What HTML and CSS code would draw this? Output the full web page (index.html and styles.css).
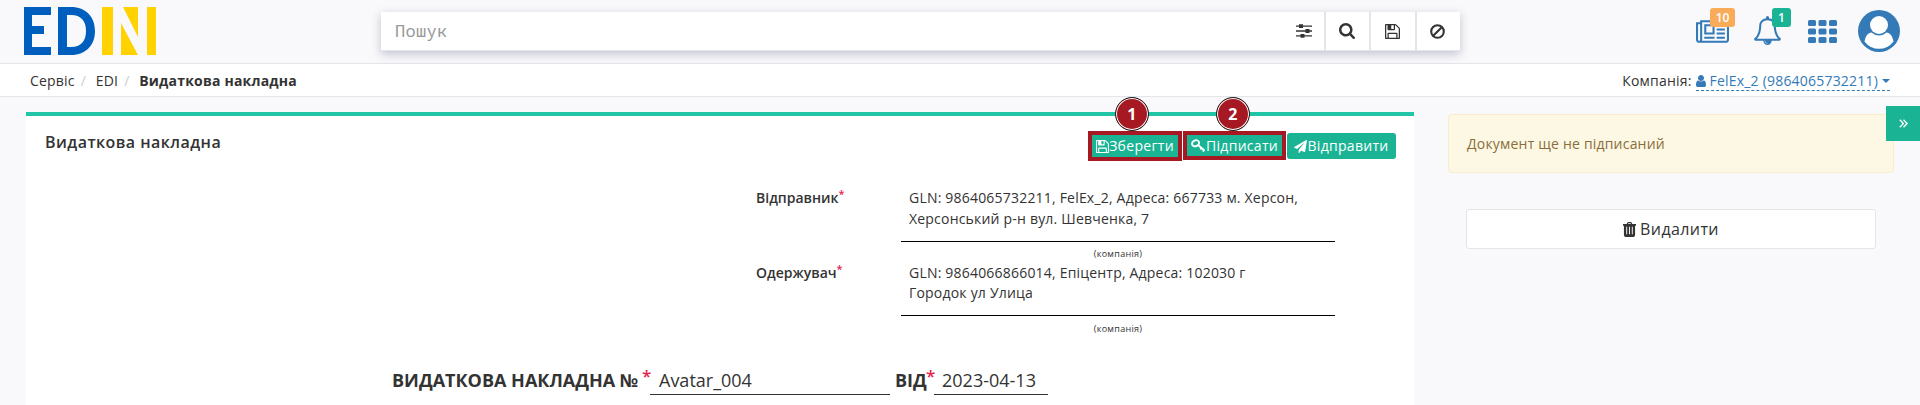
FILE: index.html
```html
<!DOCTYPE html>
<html lang="uk">
<head>
<meta charset="utf-8">
<title>Видаткова накладна</title>
<link rel="stylesheet" href="styles.css">
</head>
<body>
<svg class="sprite" aria-hidden="true">
  <symbol id="floppy" viewBox="128 128 1536 1536"><path d="M512 1536h768v-384h-768v384zm896 0h128v-896q0-14-10-38.5t-20-34.5l-281-281q-10-10-34-20t-39-10v416q0 40-28 68t-68 28h-576q-40 0-68-28t-28-68v-416h-128v1280h128v-416q0-40 28-68t68-28h832q40 0 68 28t28 68v416zm-384-928v-320q0-13-9.5-22.5t-22.5-9.5h-192q-13 0-22.5 9.5t-9.5 22.5v320q0 13 9.5 22.5t22.5 9.5h192q13 0 22.5-9.5t9.5-22.5zm640 32v928q0 40-28 68t-68 28h-1344q-40 0-68-28t-28-68v-1344q0-40 28-68t68-28h928q40 0 88 20t76 48l280 280q28 28 48 76t20 88z"/></symbol>
</svg>

<header class="topbar">
  <svg class="logo" viewBox="0 0 132 48">
    <path fill="#005fbe" d="M0 0H27V8H8V19H20V27H8V40H27V48H0ZM34 0H47C62 0 71 10 71 24S62 48 47 48H34ZM43 8V40H47C57 40 62 34 62 24S57 8 47 8Z"/>
    <path fill="#ffd200" d="M78 0H89V48H78ZM97 16L114 48H97ZM108 0H114V30L99 0ZM123 0H132V48H123Z"/>
  </svg>
  <div class="search">
    <div class="search-field"><span>Пошук</span>
      <svg class="i-sliders" viewBox="0 0 16 14"><path d="M0 2.2H16M0 7H16M0 11.8H16" stroke="#333" stroke-width="1.3"/><path fill="#333" d="M3 .3h4v3.8H3zM9.500 5.100h4v3.800h-4zM4.500 9.900h4v3.800h-4z"/></svg>
    </div>
    <div class="search-btn"><svg class="i16" viewBox="0 128 1664 1664"><path d="M1152 832q0-185-131.500-316.500t-316.500-131.500-316.500 131.500-131.500 316.500 131.500 316.500 316.500 131.500 316.500-131.500 131.500-316.500zm512 832q0 52-38 90t-90 38q-54 0-90-38l-343-342q-179 124-399 124-143 0-273.500-55.500t-225-150-150-225-55.500-273.500 55.500-273.500 150-225 225-150 273.500-55.500 273.500 55.500 225 150 150 225 55.500 273.500q0 220-124 399l343 343q37 37 37 90z"/></svg></div>
    <div class="search-btn"><svg class="i15"><use href="#floppy"/></svg></div>
    <div class="search-btn"><svg class="i15" viewBox="0 0 15 15"><g fill="none" stroke="#333" stroke-width="2.100"><circle cx="7.500" cy="7.500" r="6.300"/><path d="M3.200 11.800L11.800 3.200"/></g></svg></div>
  </div>
  <nav class="tools">
    <div class="tool tool-news"><svg viewBox="0 128 2048 1408"><path d="M1024 512h-384v384h384v-384zm128 640v128h-640v-128h640zm0-768v640h-640v-640h640zm640 768v128h-512v-128h512zm0-256v128h-512v-128h512zm0-256v128h-512v-128h512zm0-256v128h-512v-128h512zm-1536 960v-960h-128v960q0 26 19 45t45 19 45-19 19-45zm1664 0v-1088h-1536v1088q0 33-11 64h1483q26 0 45-19t19-45zm128-1216v1216q0 80-56 136t-136 56h-1664q-80 0-136-56t-56-136v-1088h256v-128h1792z"/></svg><span class="badge badge-orange">10</span></div>
    <div class="tool tool-bell"><svg viewBox="64 0 1664 1792"><path d="M912 1696q0-16-16-16-59 0-101.500-42.500t-42.500-101.500q0-16-16-16t-16 16q0 73 51.500 124.500t124.500 51.500q16 0 16-16zm-666-288h1300q-266-300-266-832 0-51-24-105t-69-103-121.500-80.500-169.500-31.500-169.500 31.500-121.500 80.500-69 103-24 105q0 532-266 832zm1482 0q0 52-38 90t-90 38h-448q0 106-75 181t-181 75-181-75-75-181h-448q-52 0-90-38t-38-90q50-42 91-88t85-119.500 74.500-158.500 50-206 19.500-260q0-152 117-282.500t307-158.500q-8-19-8-39 0-40 28-68t68-28 68 28 28 68q0 20-8 39 190 28 307 158.500t117 282.500q0 139 19.500 260t50 206 74.500 158.500 85 119.500 91 88z"/></svg><span class="badge badge-green">1</span></div>
    <svg class="tool-grid" viewBox="0 0 29 23"><g><rect width="8" height="6" rx="1.500"/><rect x="10.500" width="8" height="6" rx="1.500"/><rect x="21" width="8" height="6" rx="1.500"/><rect y="8.500" width="8" height="6" rx="1.500"/><rect x="10.500" y="8.500" width="8" height="6" rx="1.500"/><rect x="21" y="8.500" width="8" height="6" rx="1.500"/><rect y="17" width="8" height="6" rx="1.500"/><rect x="10.500" y="17" width="8" height="6" rx="1.500"/><rect x="21" y="17" width="8" height="6" rx="1.500"/></g></svg>
    <svg class="tool-user" viewBox="0 0 42 42"><circle cx="21" cy="21" r="21"/><path fill="#fff" d="M6.500 31.500C7.500 26 10 22.500 13.500 22.500A11 11 0 0 0 28.500 22.500C32 22.500 34.500 26 35.500 31.500A18 18 0 0 1 6.500 31.500Z"/><circle cx="21" cy="15" r="9" fill="#fff"/></svg>
  </nav>
</header>

<div class="crumbs">
  <div class="crumb-list"><span>Сервіс</span><i>/</i><span>EDI</span><i>/</i><b>Видаткова накладна</b></div>
  <div class="company">Компанія: <a class="company-link"><svg class="i-user" viewBox="256 128 1280 1536"><path d="M1536 1399q0 109-62.500 187t-150.500 78h-854q-88 0-150.500-78t-62.500-187q0-85 8.500-160.500t31.500-152 58.500-131 94-89 134.500-34.500q131 128 313 128t313-128q76 0 134.500 34.500t94 89 58.500 131 31.500 152 8.500 160.500zm-256-887q0 159-112.500 271.500t-271.500 112.500-271.500-112.500-112.500-271.500 112.500-271.500 271.500-112.500 271.500 112.500 112.500 271.500z"/></svg><span>FelEx_2 (9864065732211)</span><span class="caret"></span></a></div>
</div>

<main class="page">
  <section class="card">
    <div class="card-head">
      <h1>Видаткова накладна</h1>
      <div class="actions">
        <div class="mark mark-save"><button><svg class="i-btn"><use href="#floppy"/></svg>Зберегти</button><span class="step">1</span></div>
        <div class="mark mark-sign"><button><svg class="i-key" viewBox="0 0 15 13"><g fill="none" stroke="#fff"><ellipse cx="4.600" cy="4.300" rx="3.600" ry="2.900" transform="rotate(-25 4.600 4.300)" stroke-width="1.900"/><path d="M7 6L13.200 11.200M9.300 10.300L10.800 8.800M11.800 12.500L13.500 10.500" stroke-width="1.900"/></g></svg>Підписати</button><span class="step">2</span></div>
        <button class="send"><svg class="i-btn" viewBox="0 0 1792 1792"><path d="M1764 11q33 24 27 64l-256 1536q-5 29-32 45-14 8-31 8-11 0-24-5l-453-185-242 295q-18 23-49 23-13 0-22-4-19-7-30.500-23.500t-11.500-36.500v-349l864-1059-1069 925-395-162q-37-14-40-55-2-40 32-59l1664-960q15-9 32-9 20 0 36 11z"/></svg>Відправити</button>
      </div>
    </div>
    <div class="party">
      <div class="label">Відправник<sup>*</sup></div>
      <div class="value"><p>GLN: 9864065732211, FelEx_2, Адреса: 667733 м. Херсон,<br>Херсонський р-н вул. Шевченка, 7</p><small>(компанія)</small></div>
    </div>
    <div class="party party-second">
      <div class="label">Одержувач<sup>*</sup></div>
      <div class="value"><p>GLN: 9864066866014, Епіцентр, Адреса: 102030 г<br>Городок ул Улица</p><small>(компанія)</small></div>
    </div>
    <div class="invoice">
      <b class="inv-title">ВИДАТКОВА НАКЛАДНА №</b><sup>*</sup><span class="inv-no">Avatar_004</span><b class="inv-from">ВІД</b><sup>*</sup><span class="inv-date">2023-04-13</span>
    </div>
  </section>
  <aside class="side">
    <div class="alert">Документ ще не підписаний</div>
    <button class="delete"><svg class="i-trash" viewBox="0 0 14 16"><path fill="#333" fill-rule="evenodd" d="M4 2Q4.300 0 6 0H8Q9.700 0 10 2H14V4H13V14Q13 16 11 16H3Q1 16 1 14V4H0V2ZM5.300 2H8.700Q8.500 1.200 8 1.200H6Q5.500 1.200 5.300 2ZM3.500 5V13H4.500V5ZM6.500 5V13H7.500V5ZM9.500 5V13H10.500V5Z"/></svg>Видалити</button>
    <div class="toggle"><svg viewBox="0 0 9 9"><path d="M.8.800L4.400 4.500.8 8.200M4.500.800L8.100 4.500 4.500 8.200" fill="none" stroke="#fff" stroke-width="1.300"/></svg></div>
  </aside>
</main>
</body>
</html>
```
FILE: styles.css
```css
* { box-sizing: border-box; }
body {
  margin: 0;
  height: 405px;
  overflow: hidden;
  background: #f9f9fb;
  color: #333;
  font: 14px/20px "Open Sans", "Noto Sans", sans-serif;
}
svg { display: block; flex: none; }
button { font: inherit; letter-spacing: inherit; border: 0; padding: 0; margin: 0; }
.sprite { position: absolute; width: 0; height: 0; }

.topbar {
  display: flex;
  align-items: flex-start;
  height: 64px;
  padding-left: 24px;
  border-bottom: 1px solid #e4e5e8;
}
.logo { width: 132px; height: 48px; margin-top: 7px; }
.search {
  display: flex;
  width: 1079px;
  height: 39px;
  margin: 12px 0 0 225px;
  background: #fff;
  border-bottom: 1px solid #e4e5ea;
  box-shadow: 0 3px 9px rgba(60, 70, 110, .3);
}
.search-field {
  display: flex;
  flex: 1;
  align-items: center;
  justify-content: space-between;
  padding: 0 12px 0 14px;
  color: #999;
  font: 17px/36px "Noto Sans Mono", Roboto, sans-serif;
  letter-spacing: .3px;
}
.i-sliders { width: 16px; height: 14px; }
.search-btn {
  display: flex;
  align-items: center;
  justify-content: center;
  width: 45.500px;
  border-left: 2px solid #e4e5e8;
  fill: #333;
}
.search-btn svg { margin-right: 1px; }
.i16 { width: 16px; height: 16px; }
.i15 { width: 15px; height: 15px; }

.tools { display: flex; fill: #337ab7; }
.tool { position: relative; }
.tool-news { margin: 20px 0 0 236px; }
.tool-news svg { width: 33px; height: 23px; }
.tool-bell { margin: 16px 0 0 25px; }
.tool-bell svg { width: 27px; height: 29px; }
.badge {
  position: absolute;
  height: 19px;
  border-radius: 3px;
  color: #fff;
  font-size: 12px;
  font-weight: 600;
  line-height: 19px;
  text-align: center;
}
.badge-orange { left: 14px; top: -12px; width: 25px; background: #f8ac59; }
.badge-green { left: 18px; top: -8px; width: 19px; background: #1ab394; }
.tool-grid { width: 29px; height: 23px; margin: 20px 0 0 27px; }
.tool-user { width: 42px; height: 42px; margin: 10px 0 0 21px; }

.crumbs {
  display: flex;
  justify-content: space-between;
  height: 33px;
  padding: 0 30px;
  background: #fff;
  border-bottom: 1px solid #e4e5e8;
  line-height: 34px;
  letter-spacing: .2px;
}
.crumb-list { display: flex; }
.crumb-list i { width: 21px; padding-left: 6px; color: #ccc; font-style: normal; }
.company { display: flex; gap: 4px; }
.company-link {
  display: flex;
  height: 27px;
  color: #337ab7;
  border-bottom: 1px dashed #337ab7;
}
.i-user { width: 10px; height: 12px; margin: 11px 4px 0 0; fill: #337ab7; }
.caret {
  margin: 15px 0 0 4px;
  height: 4px;
  border: 4px solid transparent;
  border-top-color: #337ab7;
  border-bottom: 0;
}

.page { display: flex; align-items: flex-start; padding-left: 26px; }
.card {
  width: 1388px;
  height: 300px;
  margin-top: 15px;
  background: #fff;
  border-top: 4px solid #1fc5a5;
}
.card-head { display: flex; justify-content: space-between; padding: 15px 18px 0 19px; }
h1 { margin: 0; padding-top: 1px; font-size: 16px; font-weight: 600; line-height: 20px; letter-spacing: .45px; }
.actions { display: flex; gap: 1px; align-items: flex-start; letter-spacing: .3px; }
.actions button {
  display: flex;
  align-items: center;
  justify-content: center;
  background: #1ab394;
  color: #fff;
  fill: #fff;
  width: 100%;
  height: 100%;
}
.mark { position: relative; height: 30px; border: 4px solid #a61922; }
.mark-save { width: 94px; }
.mark-sign { width: 103px; height: 29px; }
.actions .send { width: 109px; height: 26px; margin-top: 2px; border-radius: 3px; }
.i-btn { width: 13px; height: 13px; }
.i-key { width: 15px; height: 13px; }
.step {
  position: absolute;
  top: -38px;
  left: 23px;
  width: 34px;
  height: 34px;
  border: 1px solid #222;
  border-radius: 50%;
  background: #a61922;
  box-shadow: inset 0 0 0 1px #fff;
  color: #fff;
  font-weight: 700;
  font-size: 16px;
  line-height: 32px;
  text-align: center;
}
.mark-sign .step { left: 29px; }
sup { color: #e0244c; line-height: 0; }

.party { display: flex; height: 75px; margin-top: 26px; padding-left: 730px; }
.party-second { margin-top: 0; }
.label { width: 145px; padding-top: 1px; font-weight: 600; }
.label sup { vertical-align: 5px; font-size: 11px; }
.value { width: 434px; text-align: center; }
.value p {
  height: 55px;
  margin: 0;
  padding-left: 8px;
  border-bottom: 1px solid #000;
  line-height: 21px;
  letter-spacing: .2px;
  text-align: left;
}
.party-second p { height: 54px; padding-top: 1px; line-height: 20px; }
.party-second small { padding-top: 1px; }
.value small { display: block; font-size: 9px; line-height: 24px; letter-spacing: .3px; }

.invoice { display: flex; align-items: flex-start; margin-top: 30px; padding-left: 366px; font-size: 18px; line-height: 26px; }
.inv-title { width: 250px; }
.invoice sup { width: 8px; margin-top: 9px; font-size: 17px; font-weight: 600; }
.inv-no, .inv-date { height: 28px; border-bottom: 1px solid #333; }
.inv-no { width: 240px; padding-left: 9px; }
.inv-from { width: 31px; margin-left: 5px; }
.inv-date { width: 114px; padding-left: 8px; }

.side { position: relative; width: 506px; padding: 17px 26px 0 34px; }
.alert {
  height: 59px;
  padding: 19px 18px;
  border: 1px solid #faebcc;
  border-radius: 4px;
  background: #fcf8e3;
  color: #8a6d3b;
  letter-spacing: .2px;
}
.delete {
  display: flex;
  align-items: center;
  justify-content: center;
  gap: 4px;
  width: 410px;
  height: 40px;
  margin: 36px 0 0 18px;
  border: 1px solid #e4e5e8;
  border-radius: 3px;
  background: #fff;
  color: #333;
  font-size: 16px;
  letter-spacing: .4px;
}
.i-trash { width: 13px; height: 15px; }
.toggle {
  position: absolute;
  top: 9px;
  right: 0;
  display: flex;
  align-items: center;
  justify-content: center;
  width: 34px;
  height: 35px;
  background: #1ab394;
}
.toggle svg { width: 9px; height: 9px; }
```
